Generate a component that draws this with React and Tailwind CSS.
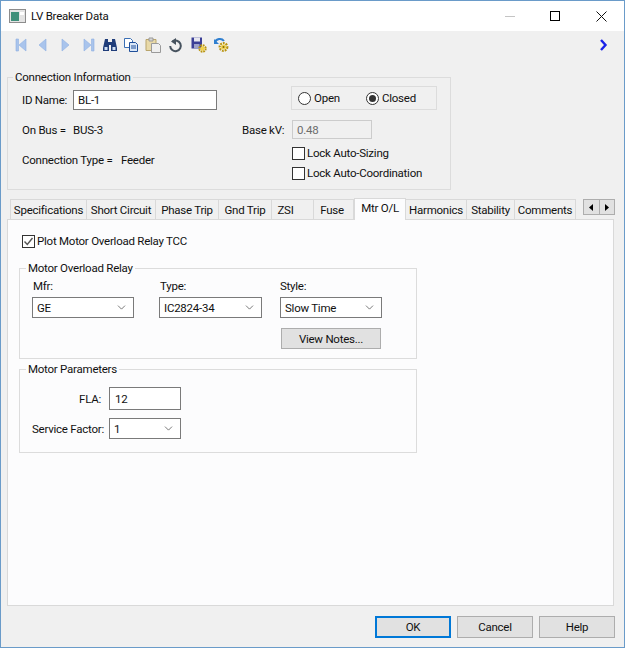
import { ChevronDown } from "lucide-react";

const font = { fontFamily: "Roboto, sans-serif" };

const tabs = [
  ["Specifications", "w-[77px]"],
  ["Short Circuit", "w-[69px]"],
  ["Phase Trip", "w-[63px]"],
  ["Gnd Trip", "w-[53px]"],
  ["ZSI", "w-[42px] pr-[14px]"],
  ["Fuse", "w-[40px] pr-[3px]"],
  ["Mtr O/L", "w-[52px]"],
  ["Harmonics", "w-[61px]"],
  ["Stability", "w-[48px]"],
  ["Comments", "w-[61px]"],
];

function Nav({ d, className }) {
  return (
    <svg width="12" height="14" viewBox="0 0 12 14" className={className}>
      <path d={d} fill="#a9c4ec" stroke="#8fb0e2" strokeWidth="0.6" />
    </svg>
  );
}

function Combo({ value, className }) {
  return (
    <div className={`flex h-[21px] items-center justify-between border border-[#7a7a7a] bg-white pl-[4px] pr-[5px] ${className}`}>
      <span>{value}</span>
      <ChevronDown size={13} strokeWidth={1.2} color="#333" />
    </div>
  );
}

function Check({ checked, label }) {
  return (
    <div className="flex items-center gap-[2px]">
      <div className="flex h-[13px] w-[13px] items-center justify-center border border-[#333] bg-white">
        {checked && (
          <svg width="11" height="11" viewBox="0 0 11 11">
            <path d="M1.5 5.5 4.3 8.5 9.5 2" fill="none" stroke="#555" strokeWidth="1.4" />
          </svg>
        )}
      </div>
      <span>{label}</span>
    </div>
  );
}

function Radio({ checked, label, className }) {
  return (
    <div className={`flex items-center gap-[3px] ${className}`}>
      <div className="flex h-[13px] w-[13px] items-center justify-center rounded-full border border-[#333] bg-white">
        {checked && <div className="h-[7px] w-[7px] rounded-full bg-[#333]" />}
      </div>
      <span>{label}</span>
    </div>
  );
}

function Toolbar() {
  return (
    <div className="flex h-[28px] items-center bg-[#f0f0f0] pl-[14px] pr-[16px]">
      <Nav d="M1 1h2.5v12H1zM11 1v12L4 7z" />
      <Nav className="ml-[10px]" d="M9 1v12L2 7z" />
      <Nav className="ml-[10px]" d="M3 1v12l7-6z" />
      <Nav className="ml-[12px]" d="M1 1v12l7-6zM8.500 1H11v12H8.500z" />
      {/* binoculars */}
      <svg width="16" height="14" viewBox="0 0 16 14" className="ml-[7px]">
        <path d="M3 1h3v3h4V1h3l2 9v3H9V7H7v6H1v-3z" fill="#1f3d7a" />
        <path d="M2.500 9h3v3h-3zM10.500 9h3v3h-3z" fill="#cfe0f5" />
      </svg>
      {/* copy */}
      <svg width="16" height="14" viewBox="0 0 16 14" className="ml-[5px]">
        <path d="M1.500.5h6l2 2v7h-8z" fill="#fff" stroke="#3a6fb5" />
        <path d="M6.500 4.500h6l2 2v7h-8z" fill="#dbe8f8" stroke="#1f4f9a" />
        <path d="M8 8h5M8 10h5" stroke="#1f4f9a" />
      </svg>
      {/* paste */}
      <svg width="17" height="16" viewBox="0 0 17 16" className="ml-[6px]">
        <path d="M1 2.500h10v11H1z" fill="#e8d9a8" stroke="#b9a56c" />
        <path d="M4 1h4v3H4z" fill="#d6d6d6" stroke="#999" />
        <path d="M6.500 6.500h7l2 2v7h-9z" fill="#efefef" stroke="#9a9a9a" />
      </svg>
      {/* undo */}
      <svg width="15" height="15" viewBox="0 0 15 15" className="ml-[6px]">
        <path d="M4.500 3.500A5.300 5.300 0 1 1 2.200 8" fill="none" stroke="#47535f" strokeWidth="2" />
        <path d="M8 0v7L3 3.500z" fill="#47535f" />
      </svg>
      {/* save + gear */}
      <svg width="16" height="16" viewBox="0 0 16 16" className="ml-[8px]">
        <path d="M0.500.5h10.500v11H.5z" fill="#3b3f96" />
        <path d="M3 .5h6v4H3z" fill="#e6e6ef" />
        <path d="M3 7h5.500v4.500H3z" fill="#9fa3c9" />
        <circle cx="11.500" cy="11.500" r="3.200" fill="none" stroke="#b9940f" strokeWidth="2" strokeDasharray="1.700 0.800" />
        <circle cx="11.500" cy="11.500" r="2.200" fill="#f2d24a" />
      </svg>
      {/* arrow + gear */}
      <svg width="16" height="16" viewBox="0 0 16 16" className="ml-[7px]">
        <path d="M1 5.500A5 4.500 0 0 1 10 4" fill="none" stroke="#2f7fd0" strokeWidth="2" />
        <path d="M0 2v5h5z" fill="#2f7fd0" />
        <circle cx="9.500" cy="10" r="3.800" fill="none" stroke="#b9940f" strokeWidth="2.200" strokeDasharray="1.800 1" />
        <circle cx="9.500" cy="10" r="2.500" fill="#f2d24a" />
        <circle cx="9.500" cy="10" r="1" fill="#7d6510" />
      </svg>
      <svg width="9" height="12" viewBox="0 0 9 12" className="ml-auto">
        <path d="M2 1l4.500 5L2 11" fill="none" stroke="#1a22e8" strokeWidth="2.400" />
      </svg>
    </div>
  );
}

function ConnectionInfo() {
  return (
    <fieldset className="mx-[6px] h-[120px] w-[444px] border border-[#dcdcdc]">
      <legend className="ml-[5px] px-[2px] leading-[14px]">Connection Information</legend>
      <div className="flex pl-[14px]">
        <div className="flex w-[220px] flex-col">
          <div className="mt-[6px] flex items-center">
            <span className="w-[51px]">ID Name:</span>
            <input readOnly value="BL-1" className="h-[20px] w-[144px] border border-[#7a7a7a] bg-white pl-[4px] outline-none" />
          </div>
          <div className="mt-[11px] flex">
            <span className="w-[51px]">On Bus =</span>
            <span>BUS-3</span>
          </div>
          <div className="mt-[12px] flex">
            <span className="w-[99px]">Connection Type =</span>
            <span>Feeder</span>
          </div>
        </div>
        <div className="flex flex-col">
          <div className="ml-[49px] mt-[2px] flex h-[24px] w-[146px] items-center border border-[#dcdcdc] pl-[6px]">
            <Radio label="Open" className="w-[68px]" />
            <Radio checked label="Closed" />
          </div>
          <div className="mt-[10px] flex items-center">
            <span className="w-[50px]">Base kV:</span>
            <div className="flex h-[19px] w-[80px] items-center border border-[#cccccc] bg-[#f0f0f0] pl-[4px] text-[#6d6d6d]">0.48</div>
          </div>
          <div className="ml-[50px] mt-[5px]"><Check label="Lock Auto-Sizing" /></div>
          <div className="ml-[50px] mt-[2px]"><Check label="Lock Auto-Coordination" /></div>
        </div>
      </div>
    </fieldset>
  );
}

function TabStrip() {
  return (
    <div className="relative z-10 ml-[9px] mt-[8px] flex h-[21px] items-end">
      {tabs.map(([name, w]) =>
        name === "Mtr O/L" ? (
          <div key={name} className={`-mb-px flex h-[22px] items-start justify-center border border-b-0 border-[#d9d9d9] bg-[#fcfcfd] pt-[0px] ${w}`}>
            {name}
          </div>
        ) : (
          <div key={name} className={`flex h-[20px] items-center justify-center border-r border-t border-[#d9d9d9] first:border-l ${w}`}>
            {name}
          </div>
        )
      )}
      <div className="mb-[4px] ml-[7px] flex h-[16px] w-[32px] self-end border border-[#adadad] bg-[#e1e1e1]">
        <div className="flex flex-1 items-center justify-center border-r border-[#adadad]">
          <svg width="5" height="7" viewBox="0 0 5 7"><path d="M4 0v7L0 3.500z" fill="#000" /></svg>
        </div>
        <div className="flex flex-1 items-center justify-center">
          <svg width="5" height="7" viewBox="0 0 5 7"><path d="M1 0v7l4-3.500z" fill="#000" /></svg>
        </div>
      </div>
    </div>
  );
}

function MtrPanel() {
  return (
    <div className="ml-[6px] h-[387px] w-[607px] border border-[#d9d9d9] bg-[#fcfcfd] pl-[11px] pt-[12px]">
      <div className="ml-[3px]"><Check checked label="Plot Motor Overload Relay TCC" /></div>
      <fieldset className="mt-[11px] h-[98px] w-[398px] border border-[#dcdcdc]">
        <legend className="ml-[6px] px-[2px] leading-[14px]">Motor Overload Relay</legend>
        <div className="flex pl-[12px]">
          <div className="w-[127px]">
            <div className="mb-[3px] ml-[1px] mt-[4px] leading-[15px]">Mfr:</div>
            <Combo value="GE" className="w-[102px]" />
          </div>
          <div className="w-[121px]">
            <div className="mb-[3px] ml-px mt-[4px] leading-[15px]">Type:</div>
            <Combo value="IC2824-34" className="w-[103px]" />
          </div>
          <div>
            <div className="mb-[3px] mt-[4px] leading-[15px]">Style:</div>
            <Combo value="Slow Time" className="w-[102px]" />
            <button className="ml-px mt-[10px] h-[21px] w-[100px] border border-[#adadad] bg-[#e1e1e1]">View Notes...</button>
          </div>
        </div>
      </fieldset>
      <fieldset className="mt-[3px] h-[91px] w-[398px] border border-[#dcdcdc]">
        <legend className="ml-[6px] px-[2px] leading-[14px]">Motor Parameters</legend>
        <div className="mt-[11px] flex items-center">
          <span className="w-[81px] text-right">FLA:</span>
          <div className="ml-[8px] flex h-[23px] w-[72px] items-center border border-[#7a7a7a] bg-white pl-[5px]">12</div>
        </div>
        <div className="mt-[8px] flex items-center">
          <span className="w-[84px] text-right">Service Factor:</span>
          <Combo value="1" className="ml-[5px] w-[72px]" />
        </div>
      </fieldset>
    </div>
  );
}

export default function App() {
  return (
    <div style={font} className="flex h-[648px] w-[625px] flex-col overflow-hidden border border-[#6a9bc9] bg-[#f0f0f0] text-[11.5px] leading-[18px] tracking-[-0.24px] text-[#111]">
      <div className="flex h-[30px] items-center bg-white pl-[8px]">
        <svg width="17" height="14" viewBox="0 0 17 14">
          <rect x="0.500" y="0.500" width="16" height="13" fill="#e4e4e4" stroke="#8c8c8c" />
          <rect x="2" y="3" width="8" height="9" fill="#3f8f7a" />
          <rect x="11" y="3" width="4" height="3" fill="#ffffff" />
        </svg>
        <span className="ml-[5px]">LV Breaker Data</span>
        <div className="ml-auto flex items-center">
          <div className="h-px w-[10px] bg-[#c4c4c4]" />
          <div className="ml-[35px] h-[10px] w-[10px] border border-black" />
          <svg width="11" height="11" viewBox="0 0 11 11" className="ml-[36px] mr-[17px]">
            <path d="M.5.5l10 10M10.500.5l-10 10" stroke="#111" strokeWidth="1" />
          </svg>
        </div>
      </div>
      <Toolbar />
      <div className="mt-[11px]"><ConnectionInfo /></div>
      <TabStrip />
      <MtrPanel />
      <div className="mt-[10px] flex gap-[6px] pl-[374px]">
        <button className="h-[22px] w-[76px] border-2 border-[#0078d7] bg-[#e1e1e1]">OK</button>
        <button className="h-[22px] w-[76px] border border-[#adadad] bg-[#e1e1e1]">Cancel</button>
        <button className="h-[22px] w-[76px] border border-[#adadad] bg-[#e1e1e1]">Help</button>
      </div>
    </div>
  );
}
